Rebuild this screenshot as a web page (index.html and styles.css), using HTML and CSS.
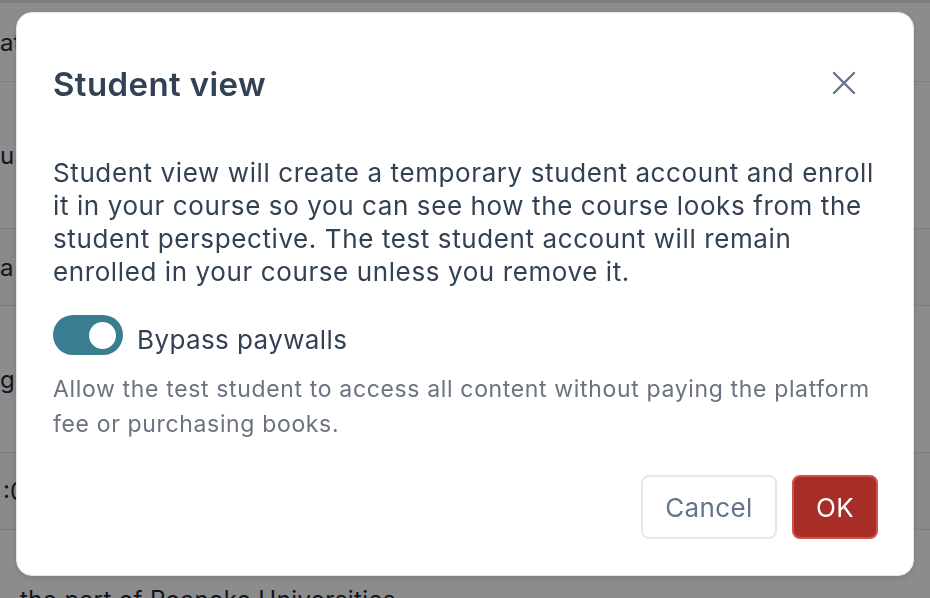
FILE: index.html
```html
<!DOCTYPE html>
<html lang="en">
<head>
<meta charset="utf-8">
<title>Student view</title>
<link rel="stylesheet" href="styles.css">
</head>
<body>
<div class="page">
  <div class="page-top"></div>
  <div class="row row-a"><span class="cell">at</span></div>
  <div class="row row-b"><span class="cell">us</span></div>
  <div class="row row-c alt"><span class="cell">a</span></div>
  <div class="row row-b"><span class="cell">g</span></div>
  <div class="row row-c alt"><span class="cell cell-time">:0</span></div>
  <div class="row row-last"><span class="cell cell-tail">the part of Roanoke Universities</span></div>
</div>
<div class="overlay"></div>
<div class="modal" role="dialog" aria-labelledby="dlg-title">
  <div class="modal-header">
    <h2 id="dlg-title" class="modal-title">Student view</h2>
    <button class="close-btn" aria-label="Close">
      <svg width="24" height="24" viewBox="0 0 24 24" fill="none" stroke="#64748b" stroke-width="2.4" stroke-linecap="round"><path d="M2 2 L22 22 M22 2 L2 22"/></svg>
    </button>
  </div>
  <p class="modal-text">Student view will create a temporary student account and enroll it in your course so you can see how the course looks from the student perspective. The test student account will remain enrolled in your course unless you remove it.</p>
  <label class="toggle-row">
    <span class="toggle"><span class="knob"></span></span>
    <span class="toggle-label">Bypass paywalls</span>
  </label>
  <p class="help">Allow the test student to access all content without paying the platform fee or purchasing books.</p>
  <div class="actions">
    <button class="btn btn-cancel">Cancel</button>
    <button class="btn btn-ok">OK</button>
  </div>
</div>
</body>
</html>
```
FILE: styles.css
```css
html, body {
  margin: 0;
  padding: 0;
  height: 100%;
  overflow: hidden;
}
body {
  font-family: Inter, "Noto Sans", "Liberation Sans", sans-serif;
  background: #ffffff;
  color: #1f2937;
}
.page {
  display: flex;
  flex-direction: column;
}
.page-top {
  height: 3px;
  background: #e2e2e2;
}
.row {
  display: flex;
  align-items: center;
  border-bottom: 1px solid #e5e7eb;
  font-size: 24px;
  color: #1f2937;
  white-space: nowrap;
}
.row-a { height: 78px; }
.row-b { height: 146px; }
.row-c { height: 76px; }
.alt { background: #fafafa; }
.row-last {
  height: 80px;
  align-items: flex-start;
  border-bottom: none;
}
.cell { display: block; }
.cell-time { padding-left: 3px; }
.cell-tail { padding-left: 20px; padding-top: 55px; letter-spacing: 0.4px; }
.overlay {
  position: fixed;
  inset: 0;
  background: rgba(0, 0, 0, 0.45);
}
.modal {
  position: fixed;
  left: 16px;
  top: 12px;
  width: 898px;
  height: 564px;
  box-sizing: border-box;
  background: #ffffff;
  border-radius: 16px;
  border: 1px solid #e2e5ea;
  box-shadow: 0 2px 6px rgba(0, 0, 0, 0.12);
  padding: 51px 35px 36px 36px;
  display: flex;
  flex-direction: column;
}
.modal-header {
  display: flex;
  align-items: center;
  justify-content: space-between;
  height: 40px;
}
.modal-title {
  margin: 0;
  font-size: 33px;
  line-height: 40px;
  font-weight: 600;
  color: #334155;
  letter-spacing: 0.4px;
}
.close-btn {
  border: none;
  background: none;
  padding: 0;
  width: 24px;
  height: 24px;
  margin-right: 22px;
  margin-top: -3px;
  display: flex;
}
.modal-text {
  margin: 52px 0 0;
  font-size: 26px;
  line-height: 33px;
  color: #334155;
  letter-spacing: 0.6px;
}
.toggle-row {
  display: flex;
  align-items: center;
  gap: 14px;
  margin-top: 27px;
  height: 40px;
}
.toggle {
  width: 70px;
  height: 40px;
  border-radius: 20px;
  background: #387d92;
  display: flex;
  align-items: center;
  justify-content: flex-end;
  padding: 0 7px;
  box-sizing: border-box;
}
.knob {
  width: 27px;
  height: 27px;
  border-radius: 50%;
  background: #ffffff;
}
.toggle-label {
  font-size: 26px;
  line-height: 40px;
  color: #334155;
  padding-top: 9px;
  letter-spacing: 0.4px;
}
.help {
  margin: 17px 0 0;
  font-size: 23px;
  line-height: 35px;
  color: #6b7280;
  letter-spacing: 0.65px;
}
.actions {
  margin-top: auto;
  display: flex;
  justify-content: flex-end;
  gap: 15px;
}
.btn {
  height: 64px;
  border-radius: 8px;
  font-family: inherit;
  font-size: 26px;
  padding: 0;
  box-sizing: border-box;
  letter-spacing: 0.4px;
}
.btn-cancel {
  width: 136px;
  background: #ffffff;
  border: 2px solid #e2e8f0;
  color: #64748b;
}
.btn-ok {
  width: 86px;
  background: #a82d27;
  border: 2px solid #d4504a;
  color: #ffffff;
}
```
